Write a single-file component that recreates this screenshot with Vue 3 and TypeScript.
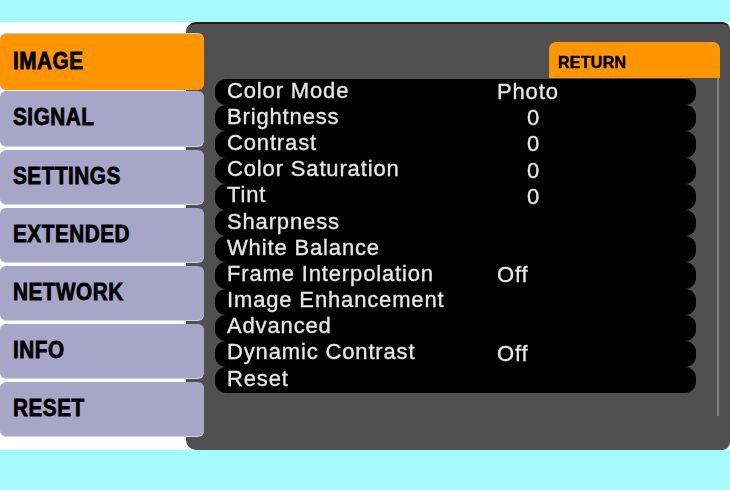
<script setup lang="ts">
interface Row { label: string; value?: string; numeric?: boolean }
const nav: string[] = ['IMAGE', 'SIGNAL', 'SETTINGS', 'EXTENDED', 'NETWORK', 'INFO', 'RESET']
const rows: Row[] = [
  { label: 'Color Mode', value: 'Photo' },
  { label: 'Brightness', value: '0', numeric: true },
  { label: 'Contrast', value: '0', numeric: true },
  { label: 'Color Saturation', value: '0', numeric: true },
  { label: 'Tint', value: '0', numeric: true },
  { label: 'Sharpness' },
  { label: 'White Balance' },
  { label: 'Frame Interpolation', value: 'Off' },
  { label: 'Image Enhancement' },
  { label: 'Advanced' },
  { label: 'Dynamic Contrast', value: 'Off' },
  { label: 'Reset' },
]
</script>

<template>
  <div class="page">
    <div class="stage">
      <nav class="nav">
        <div v-for="(item, i) in nav" :key="item" class="nav-item" :class="{ active: i === 0 }">
          <span class="nav-text">{{ item }}</span>
        </div>
      </nav>
      <section class="panel">
        <div class="tab-row"><div class="tab"><span class="tab-text">RETURN</span></div></div>
        <div class="body">
          <ul class="list">
            <li v-for="row in rows" :key="row.label" class="row">
              <span class="label">{{ row.label }}</span>
              <span v-if="row.value" class="value" :class="{ num: row.numeric }">{{ row.value }}</span>
            </li>
          </ul>
        </div>
      </section>
    </div>
  </div>
</template>

<style>
html, body { margin: 0; padding: 0; background: #a5fbff; }
</style>

<style scoped>
.page {
  width: 730px;
  height: 490px;
  padding: 22px 0 40px;
  box-sizing: border-box;
  background: #a5fbff;
  overflow: hidden;
}
.stage {
  display: flex;
  height: 428px;
  background: #fff;
}
.nav {
  position: relative;
  z-index: 1;
  flex: 0 0 204px;
  display: flex;
  flex-direction: column;
  gap: 4px;
  padding-top: 12px;
  box-sizing: border-box;
}
.nav-item {
  height: 54px;
  display: flex;
  align-items: center;
  padding-left: 13px;
  box-sizing: border-box;
  background: #a8a6c8;
  border-radius: 6px;
  box-shadow: 0 1px 0 #d4d4d4;
  color: #000;
}
.nav-item:nth-child(2) { height: 55px; }
.nav-item.active {
  height: 56px;
  margin-bottom: -3px;
  background: #ff9600;
  box-shadow: 0 -1px 0 #c8c8c8;
}
.nav-text {
  display: inline-block;
  font: 700 23px/1 "Liberation Sans", Arial, sans-serif;
  letter-spacing: 0.6px;
  -webkit-text-stroke: 0.8px #000;
  white-space: nowrap;
  transform: translateY(-1px) scaleX(0.9);
  transform-origin: left center;
}
.panel {
  flex: 1;
  margin-left: -18px;
  background: #505050;
  border-top: 2px solid #1e1e1e;
  border-radius: 10px 8px 8px 10px;
  display: flex;
  flex-direction: column;
  padding: 18px 10px 0 11px;
  box-sizing: border-box;
}
.tab-row {
  display: flex;
  justify-content: flex-end;
}
.tab {
  width: 171px;
  height: 36px;
  display: flex;
  align-items: center;
  padding: 4px 0 0 9px;
  box-sizing: border-box;
  background: #ff9600;
  border-radius: 7px 7px 0 0;
  color: #000;
}
.tab-text {
  display: inline-block;
  font: 700 17px/1 "Liberation Sans", Arial, sans-serif;
  letter-spacing: 0.2px;
  -webkit-text-stroke: 0.5px #000;
  transform: scaleX(0.95);
  transform-origin: left center;
}
.body {
  height: 338px;
  margin-left: 18px;
  margin-right: 1px;
  border-right: 2px solid #808080;
  box-sizing: border-box;
  padding-top: 1px;
}
.list {
  list-style: none;
  margin: 0;
  padding: 0;
  width: 481px;
}
.row {
  height: 26.2px;
  display: flex;
  align-items: center;
  background: #000;
  border-radius: 11px;
  padding: 0 0 3px 12px;
  box-sizing: border-box;
  position: relative;
  color: #e8e8e8;
  font: 400 22px/1 "Liberation Sans", Arial, sans-serif;
  letter-spacing: 0.85px;
}
.label, .value {
  filter: blur(0.35px);
  -webkit-text-stroke: 0.3px #e8e8e8;
}
.value {
  position: absolute;
  left: 282px;
  top: 2px;
}
.value.num { left: 312px; }
</style>
